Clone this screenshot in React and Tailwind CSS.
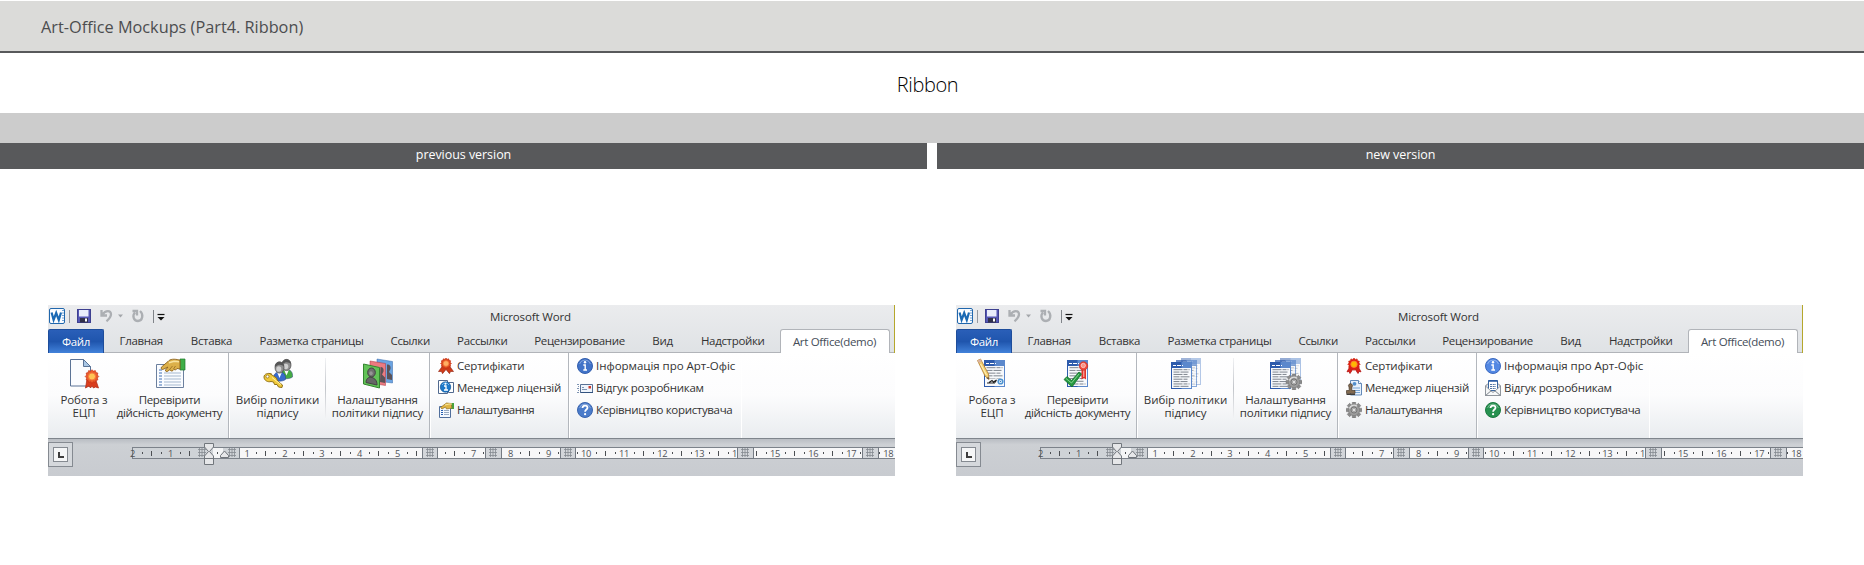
import React from "react";

const TABS = [
  ["Главная", "w-[70.5px]"],
  ["Вставка", "w-[70px]"],
  ["Разметка страницы", "w-[130px]"],
  ["Ссылки", "w-[67.5px]"],
  ["Рассылки", "w-[76.5px]"],
  ["Рецензирование", "w-[118px]"],
  ["Вид", "w-[48px]"],
  ["Надстройки", "w-[92.5px]"],
];

/* ---------- shared drawing pieces ---------- */

function Rosette({ cx, cy, r, fill = "#e2481c", rim = "#c12a10", core = "#ffb74a" }) {
  const pts = [];
  for (let i = 0; i < 24; i++) {
    const a = (i * Math.PI) / 12;
    const k = i % 2 ? r * 0.82 : r;
    pts.push(`${cx + Math.cos(a) * k},${cy + Math.sin(a) * k}`);
  }
  return (
    <>
      <polygon points={pts.join(" ")} fill={fill} stroke={rim} strokeWidth="0.6" />
      <circle cx={cx} cy={cy} r={r * 0.52} fill={core} stroke="#f6793a" strokeWidth={r * 0.14} />
    </>
  );
}

function Gear({ cx, cy, r }) {
  return (
    <g transform={`translate(${cx} ${cy}) scale(${r / 8})`}>
      {[0, 45, 90, 135].map((a) => (
        <rect key={a} x="-1.8" y="-8" width="3.6" height="16" rx="0.5" fill="#8b8b8b" stroke="#656565" strokeWidth="0.4" transform={`rotate(${a})`} />
      ))}
      <circle r="5.7" fill="#9c9c9c" stroke="#747474" strokeWidth="0.5" />
      <path d="M-4.6 -1.5 A4.8 4.8 0 0 1 3 -3.8" stroke="#dcdcdc" strokeWidth="1.4" fill="none" />
      <circle r="3" fill="#b9b9b9" stroke="#686868" strokeWidth="0.8" />
      <circle r="1.5" fill="#f4f4f4" stroke="#777" strokeWidth="0.5" />
    </g>
  );
}

function Page({ x, y, w, h, lines = 6, fade = 1 }) {
  const step = (h - 8) / lines;
  return (
    <g opacity={fade}>
      <rect x={x} y={y} width={w} height={h} fill="#5b88cc" />
      <rect x={x} y={y} width={w / 2} height={h} fill="#2d5bac" />
      <rect x={x + 1} y={y + 6} width={w - 2} height={h - 7} fill="#f7f9fc" />
      <path d={`M${x + 2} ${y + 3.5}h3m1 0h4m1 0h1`} stroke="#fff" strokeWidth="1" />
      {Array.from({ length: lines }, (_, i) => (
        <path key={i} d={`M${x + 2.5} ${y + 7.7 + i * step}h${w - 5 - (i % 3)}`} stroke="#7e858e" strokeWidth="1" strokeDasharray={i % 2 ? "6 1 9 1" : "9 1 4 1"} />
      ))}
    </g>
  );
}

function Hand({ transform }) {
  return (
    <g transform={transform}>
      <path d="M24 0h5v11h-5z" fill="#3fae47" stroke="#1d7a2b" strokeWidth="0.7" />
      <path d="M24 1.2C18-.5 14 0 12 2.500L5.500 8C4.500 9.700 6 11.200 7.500 10.200L12 8l-2.500 3c-.5 1.500 1.500 2 2.300 1.200L14 10.500c0 1.500 2 2 3 1l1-1.200c1 1 2.500.500 3-.800L24 10z" fill="#dcb04a" stroke="#8c621c" strokeWidth="0.9" />
      <path d="M13 3.800l5-1.500 5 .500" stroke="#f8e3a0" strokeWidth="1.500" fill="none" />
      <path d="M14 10l2.500-3M17.500 10l2-3" stroke="#8c621c" strokeWidth="0.700" />
    </g>
  );
}

function Person({ x, y, shirt, s = 1 }) {
  return (
    <g transform={`translate(${x} ${y}) scale(${s})`}>
      <path d="M-6 17.500c-.5-5 2-7.500 6-7.500s6.500 2.500 6 7.500c-3 2.300-9 2.300-12 0z" fill={shirt} stroke="#26407c" strokeWidth="0.5" />
      <path d="M-2.500 10l2.500 6 2.500-6z" fill="#fff" />
      <ellipse cx="0" cy="5.500" rx="4.500" ry="5.600" fill="#8e8e8e" stroke="#4a4a4a" strokeWidth="0.7" />
      <path d="M-4.500 5C-5.500-1.500 4.500-2.500 4.600 4.500 2 3 0 1.500-4.500 5z" fill="#565656" />
      <ellipse cx="-.7" cy="7" rx="2.500" ry="2.800" fill="#cfcfcf" />
    </g>
  );
}

/* ---------- large icons ---------- */

const Big = ({ children }) => (
  <svg width="32" height="32" viewBox="0 0 32 32" className="shrink-0">{children}</svg>
);

const CertPage = () => (
  <Big>
    <path d="M2.500 1.500h13l7 7v19.500h-20z" fill="#fbfcff" stroke="#5b7396" />
    <path d="M15.500 1.500v7h7z" fill="#a9c7e6" stroke="#5b7396" />
    <path d="M19 21l-1.500 9 3.500-2 1.500 2 1.500-2 1.500 2 2-1 3 1-3-9z" fill="#d93d1e" stroke="#aa2510" strokeWidth="0.700" />
    <Rosette cx={24} cy={18.500} r={6.800} fill="#ea5b2c" core="#ffc355" />
  </Big>
);

const CheckHand = () => (
  <Big>
    <path d="M2.500 6.500h27v23h-27z" fill="#fafcff" stroke="#6c809e" />
    <path d="M5 12h3M5 15h3M5 18h3M5 21h3M5 24h3M5 27h3" stroke="#3e6fb3" />
    <path d="M10 15h17M10 18h17M10 21h17M10 24h17M10 27h17" stroke="#a5b8cf" />
    <Hand transform="translate(2 1)" />
  </Big>
);

const KeyPeople = () => (
  <Big>
    <Person x={24.500} y={1.500} shirt="#46ab44" />
    <Person x={17.500} y={4} shirt="#386bcc" />
    <path d="M8.500 16l6 4 1 3 5 4-.5 2.500-3.500-.5-1.500-2.500-2.500 0-1-2.500-2.500-.500c-3 1-7-1-7-4.500 0-3 4-4.500 7.500-3z" fill="#f0c93a" stroke="#927215" />
    <circle cx="5.500" cy="18.500" r="1.500" fill="#fff" stroke="#927215" strokeWidth="0.800" />
    <path d="M10 19.500l9 7" stroke="#fff2a4" />
  </Big>
);

const Cards = () => (
  <Big>
    <g stroke="#777b" strokeWidth="0.500">
      <path d="M15 1l15.500 2.500v21.500l-15.500-2z" fill="#6ba4e2" stroke="#3466a8" />
      <path d="M8 3l15.500 2.500v22L8 25z" fill="#ec7a80" stroke="#a93443" />
    </g>
    <path d="M25 6.500c3 0 4 2 3.500 4.500l-1.500 3 3 3v5l-5-1zM18.500 9c2.500 0 3.500 2 3 4.500l-1.500 3 3 3v5.500l-5-1z" fill="#5b5258" />
    <path d="M1.500 6l16 3.500v20.500l-16-4z" fill="#62c257" stroke="#34862f" />
    <ellipse cx="9.500" cy="14.500" rx="3.800" ry="4.500" fill="#6f6f6f" stroke="#414141" />
    <path d="M4 24.500c0-4 3-6 6-5s5 3 5 7.500z" fill="#666" stroke="#444" />
    <ellipse cx="9" cy="15.200" rx="1.700" ry="2" fill="#969696" />
  </Big>
);

const SignPage = () => (
  <Big>
    <Page x={8} y={2} w={21} h={27} lines={7} />
    <rect x="9.500" y="20.500" width="18.500" height="7" fill="#f7f9fc" />
    <path d="M11 25h8M13 24.500l3-2 1.500 1.500 3-2-1.500 2.500" stroke="#222" strokeWidth="1.100" fill="none" />
    <circle cx="24.500" cy="23.500" r="2.300" fill="#fff" stroke="#4d94d2" strokeWidth="1.600" />
    <circle cx="24.500" cy="23.500" r="0.800" fill="#3b7cc0" />
    <path d="M1.500 2.500l3-1.500 8 15 .500 5.500-4-3.500z" fill="#f3cf71" stroke="#b17b2d" strokeWidth="0.800" />
    <path d="M1.500 2.500l3-1.500 1.200 2.500-2.800 1.500z" fill="#d9b3a0" />
    <path d="M4.500 6l6 11" stroke="#fff0b4" strokeWidth="1.100" />
    <path d="M10.500 20l2-1 .5 2.500z" fill="#54422c" />
  </Big>
);

const VerifyPage = () => (
  <Big>
    <Page x={5} y={2} w={21} h={27} lines={7} />
    <path d="M19.500 11h4.500v10.500l-2.200-1.500-2.300 1.500z" fill="#e2342b" />
    <path d="M21.800 12v7" stroke="#fff" strokeWidth="0.700" />
    <circle cx="21.500" cy="8" r="4.200" fill="#ee493b" stroke="#c72c25" strokeWidth="0.700" />
    <circle cx="21.300" cy="7.500" r="2.200" fill="#f89387" stroke="#fff" strokeWidth="0.500" />
    <path d="M2 21.500l3-3 4.500 4L17 14l2.500 2L10 29z" fill="#259740" stroke="#126f2a" strokeWidth="0.800" />
    <path d="M4 20.500l5.500 4.500 7.500-9" stroke="#8edb96" fill="none" strokeWidth="0.900" />
  </Big>
);

const PageStack = () => (
  <Big>
    <Page x={11} y={0} w={20} h={27} fade={0.450} lines={7} />
    <Page x={6} y={2} w={21} h={27} fade={0.7} lines={7} />
    <Page x={1} y={4} w={21} h={27} lines={8} />
  </Big>
);

const PageStackGear = () => (
  <Big>
    <Page x={10} y={0} w={21} h={26} fade={0.500} lines={7} />
    <Page x={5} y={2} w={21} h={27} fade={0.7} lines={7} />
    <Page x={0} y={4} w={21} h={27} lines={8} />
    <Gear cx={24} cy={24} r={8} />
  </Big>
);

/* ---------- small icons ---------- */

const Small = ({ children }) => (
  <svg width="16" height="16" viewBox="0 0 16 16" className="shrink-0">{children}</svg>
);

const Award = () => (
  <Small>
    <path d="M4.500 8L.5 13.500l3 0 1 2.200L8 11.500l3.500 4.200 1-2.200 3 0L11.500 8z" fill="#cf3a19" stroke="#8f220f" strokeWidth="0.600" />
    <Rosette cx={8} cy={5.500} r={5.400} fill="#dc4b20" core="#ffae63" />
  </Small>
);

const AwardBright = () => (
  <Small>
    <path d="M4 8.500L1 13.800l2-.300 1 2 3-4.500zM12 8.500l3 5.300-2-.300-1 2-3-4.500z" fill="#d9211c" stroke="#b21310" strokeWidth="0.800" />
    <Rosette cx={8} cy={6.300} r={6.200} fill="#e41d12" core="#ffb800" />
  </Small>
);

const LicenseInfo = () => (
  <Small>
    <path d="M.5.500h9v13h-9z" fill="#fff" stroke="#51698f" />
    <path d="M10.500 2.500h5v10h-5z" fill="#fff" stroke="#51698f" />
    <circle cx="7.500" cy="7" r="5.200" fill="#1c78c9" stroke="#0e559a" strokeWidth="0.700" />
    <path d="M4 5a4 4 0 0 1 7 0" stroke="#74b9ee" fill="none" />
    <path d="M6 6h2v4M6 10h4" stroke="#fff" strokeWidth="1.300" fill="none" />
    <circle cx="7.500" cy="3.700" r="1" fill="#fff" />
  </Small>
);

const FormHand = () => (
  <Small>
    <path d="M1.500 4.500h11v11h-11z" fill="#f5f9ff" stroke="#516f9c" />
    <path d="M3 8.500h2M3 10.500h2M3 12.500h2" stroke="#275fb1" />
    <path d="M6 8.500h5M6 10.500h5M6 12.500h5" stroke="#96a9c1" />
    <path d="M13 1h3v6h-3z" fill="#47a23d" />
    <path d="M13 1.500L8.500 1 2.500 5.500l1.500 1.500 3.500-2 1 2 3-.5L14 6z" fill="#e0b544" stroke="#947021" strokeWidth="0.700" />
    <path d="M7 3l4-1h3" stroke="#fbea9e" fill="none" />
  </Small>
);

const StampPage = () => (
  <Small>
    <path d="M4.500.500h8l3 3v11.500h-11z" fill="#e6f0fc" stroke="#6289b8" />
    <path d="M12.500.500v3h3" fill="#fff" stroke="#6289b8" />
    <circle cx="8.500" cy="3.800" r="1.900" fill="#518fce" />
    <path d="M7 8h7M8 10.500h6M9 12.500h5" stroke="#79a4d3" />
    <path d="M3 7a2 2 0 1 1 3 0L5.700 10.500H9v3H.5v-3h2.800z" fill="#81694f" stroke="#473a2d" strokeWidth="0.700" />
    <path d="M.5 14.500h8.500" stroke="#3f3c39" />
  </Small>
);

const GearSmall = () => <Small><Gear cx={8} cy={8} r={7.900} /></Small>;

const RoundBadge = ({ color, edge, glyph }) => (
  <Small>
    <circle cx="8" cy="8" r="7.500" fill={color} stroke={edge} />
    <path d="M2.500 6a5.800 5.800 0 0 1 11 0" stroke="#ffffff55" fill="none" />
    {glyph === "i" ? (
      <>
        <circle cx="8" cy="4.300" r="1.200" fill="#fff" />
        <path d="M6.300 7h1.900v5M6.300 12h3.700" stroke="#fff" strokeWidth="1.400" fill="none" />
      </>
    ) : (
      <>
        <path d="M5.500 6c0-3.200 5-3.200 5-.300 0 1.800-2.400 1.800-2.400 4" stroke="#fff" strokeWidth="1.800" fill="none" />
        <circle cx="8.100" cy="12.200" r="1.100" fill="#fff" />
      </>
    )}
  </Small>
);

const MailFast = () => (
  <Small>
    <path d="M0 4.500h2M1 6.500h1M0 8.500h2M1 10.500h1M0 12.500h2" stroke="#7d93b1" />
    <path d="M3.500 4.500h12v8h-12z" fill="#eef4fc" stroke="#587094" />
    <path d="M3.500 12.500h12.500" stroke="#31527f" />
    <path d="M5 9.500h5M5 7.500h2" stroke="#7d93b1" />
    <path d="M11.500 6h2.500v2.500h-2.500z" fill="#cf3a2c" />
  </Small>
);

const MailLetter = () => (
  <Small>
    <path d="M.5 6L3 3.500h10L15.500 6v9.500H.5z" fill="#e3e5e8" stroke="#797f88" />
    <path d="M3.500.500h9v10h-9z" fill="#fff" stroke="#38659f" />
    <path d="M3.500 1h9" stroke="#2a5ba6" strokeWidth="1.500" />
    <path d="M5 4.500h6M5 6.500h6M5 8.500h6" stroke="#5577a5" strokeDasharray="2 .7" />
    <path d="M.5 6l5.500 5L.5 15.500zM15.500 6L10 11l5.500 4.500z" fill="#f5f6f7" stroke="#858b93" strokeWidth="0.800" />
    <path d="M.7 15.500L6 11l2 1.500L10 11l5.300 4.500z" fill="#f8f9fa" stroke="#858b93" strokeWidth="0.800" />
  </Small>
);

/* ---------- quick access bar ---------- */

function QuickAccess() {
  return (
    <svg width="124" height="24" viewBox="0 0 124 24" className="shrink-0">
      <rect x="1.500" y="3.500" width="15" height="15" rx="1.500" fill="#f8fbff" stroke="#2167ac" />
      <path d="M14 5.500h2M14 8h2M14 10.500h2M14 13h2M14 15.500h2" stroke="#74a5d6" />
      <rect x="3" y="6" width="10.500" height="10.500" fill="#fff" />
      <path d="M3.600 7.500l2 7.500 2.600-7 2.600 7 2.200-7.500" stroke="#1a69b4" strokeWidth="2.200" fill="none" />
      <path d="M21.500 5v13" stroke="#9599a0" />
      <rect x="29.500" y="4.500" width="13" height="13" fill="#5557b4" stroke="#3e4090" />
      <rect x="31" y="5" width="9.500" height="6.500" fill="#e9edfb" />
      <rect x="32" y="13" width="8" height="4.500" fill="#303049" />
      <rect x="37" y="13.500" width="2" height="3" fill="#fff" />
      <path d="M53.500 5v5.500h5.500M54.500 9.500c3-4.500 8.500-4.500 8.500-.2 0 3-2 4.700-4.500 7" stroke="#acafb3" strokeWidth="2.300" fill="none" />
      <path d="M70 9.500h5l-2.500 3z" fill="#a3a6aa" />
      <path d="M87 7.500c-3 3-1.500 8.500 3 8.500s6-6.500 2-10M84.500 6h4.500v4.500" stroke="#acafb3" strokeWidth="2.300" fill="none" />
      <path d="M105.500 5v13" stroke="#808489" />
      <path d="M109.500 9.500h7" stroke="#111" strokeWidth="1.200" />
      <path d="M109.500 12h7l-3.500 3.500z" fill="#111" />
    </svg>
  );
}

/* ---------- ruler ---------- */

const NUMBERS = [[84.5, "2"], [122.5, "1"], [199, "1"], [236.7, "2"], [273.8, "3"], [311.5, "4"], [349.5, "5"], [425.5, "7"], [462.5, "8"], [500.5, "9"], [538, "10"], [576, "11"], [614.3, "12"], [651.3, "13"], [686.5, "1"], [727, "15"], [765.3, "16"], [803.3, "17"], [840.3, "18"]];
const BARS = [103.5, 141.5, 217.5, 255.5, 292.5, 330.5, 368.5, 406.5, 481.5, 557.5, 595.5, 633.5, 670.5, 708.5, 746.5, 784.5];
const BLOCKS = [[374, 389], [437, 453], [512, 527], [689, 705], [814, 830]];
const NO_DOT = [[148, 162], [374, 389], [689, 715]];

function Grid({ x }) {
  return (
    <path d={`M${x} 8.500h8M${x} 11.500h8M${x} 14.500h8M${x + 1.5} 7v9M${x + 4} 7v9M${x + 6.5} 7v9`} stroke="#858a91" strokeWidth="0.800" />
  );
}

function Ruler() {
  const dots = BARS.flatMap((b) => [b - 9, b + 9.5]).concat([169.5, 435.5, 510.5, 529, 812.5, 831.5]).filter((d) => !NO_DOT.some(([a, b]) => d > a && d < b));
  return (
    <svg width="763" height="24" viewBox="84 0 763 24" className="ml-auto mt-[2px] block overflow-visible">
      <rect x="84.500" y="6.500" width="107" height="11" fill="#cfd3d7" stroke="#7c828a" />
      <rect x="191.500" y="6.500" width="660" height="11" fill="#f7f7f8" stroke="#7c828a" />
      <rect x="165" y="7" width="10" height="10" fill="#f4f5f6" />
      {BLOCKS.map(([a, b]) => (
        <g key={a}>
          <rect x={a + 0.5} y="6.500" width={b - a} height="11" fill="#d3d6da" stroke="#757b83" />
          <Grid x={a + 4} />
        </g>
      ))}
      <Grid x={150} />
      <Grid x={180} />
      {BARS.map((b) => <rect key={b} x={b - 0.5} y="10" width="1" height="5" fill="#4c4f53" />)}
      {dots.map((d) => <rect key={d} x={Math.round(d - 0.5)} y="11" width="1" height="2" fill="#4c4f53" />)}
      {NUMBERS.map(([x, t]) => (
        <text key={x} x={x} y="15.500" textAnchor="middle" fontSize="9.300" fill="#4f5257" fontFamily="Open Sans" fontWeight="500">{t}</text>
      ))}
      <path d="M156.500 2.500h9v3.500l-4 4.500 4 4.500v8.500h-9V15l4-4.500-4-4.500z" fill="#e6e7e9" stroke="#71767c" />
      <path d="M157 17.500h8" stroke="#71767c" />
      <path d="M172.500 16.500v-2l4-4.500 4 4.500v2z" fill="#e6e7e9" stroke="#71767c" />
    </svg>
  );
}

/* ---------- ribbon ---------- */

function BigButton({ icon: Icon, lines, className }) {
  return (
    <div className={`flex flex-col items-center text-center whitespace-nowrap ${className}`}>
      <Icon />
      <div className="mt-[3px] leading-[13px]">
        {lines.map((l) => <div key={l}>{l}</div>)}
      </div>
    </div>
  );
}

function SmallButton({ icon: Icon, text, className = "" }) {
  return (
    <div className={`flex h-[22px] items-center gap-[3px] whitespace-nowrap ${className}`}>
      <Icon />
      <span className="leading-[16px]">{text}</span>
    </div>
  );
}

const Divider = () => <div className="h-full w-[2px] shrink-0 border-l border-[#b3b7bd] bg-white" />;

function WordWindow({ big, small }) {
  const [b1, b2, b3, b4] = big;
  return (
    <div className="flex h-[171px] w-[847px] flex-col overflow-hidden text-[11.5px] font-medium tracking-[-0.33px] text-[#333333]">
      <div className="flex h-[48px] flex-col border-r border-[#b5a72c] bg-linear-to-b from-[#ebecee] to-[#dfe2e5]">
        <div className="flex h-[24px] items-center">
          <QuickAccess />
          <span className="ml-[318px] tracking-[-0.15px] whitespace-nowrap">Microsoft Word</span>
        </div>
        <div className="flex h-[24px] whitespace-nowrap shadow-[inset_0_-1px_0_#b1b4b9]">
          <div className="mr-[2px] flex w-[56px] shrink-0 items-center justify-center rounded-t-[2px] border border-b-0 border-[#1e4d9b] bg-linear-to-b from-[#2a5fb8] via-[#1f55ad] to-[#4282da] text-white">Файл</div>
          {TABS.map(([t, w]) => (
            <div key={t} className={`flex shrink-0 items-center justify-center ${w}`}>{t}</div>
          ))}
          <div className="ml-[0.5px] flex w-[110px] shrink-0 items-center justify-center rounded-t-[3px] border border-b-0 border-[#b1b4b9] bg-white text-[#454d58]">Art Office(demo)</div>
        </div>
      </div>
      <div className="flex h-[85px] bg-linear-to-b from-white via-[#fcfcfd] to-[#e9ecef]">
        <div className="flex w-[180px] shrink-0 pt-[5px]">
          <BigButton icon={b1} lines={["Робота з", "ЕЦП"]} className="w-[72px] tracking-[-0.1px]" />
          <BigButton icon={b2} lines={["Перевірити", "дійсність документу"]} className="w-[99px]" />
        </div>
        <Divider />
        <div className="flex w-[199px] shrink-0 pt-[5px]">
          <BigButton icon={b3} lines={["Вибір політики", "підпису"]} className="w-[95px] tracking-[-0.05px]" />
          <div className="h-[60px] w-px bg-linear-to-b from-[#f1f2f4] via-[#c2c5ca] to-[#f1f2f4]" />
          <BigButton icon={b4} lines={["Налаштування", "політики підпису"]} className="w-[103px] tracking-[-0.22px]" />
        </div>
        <Divider />
        <div className="w-[137px] shrink-0 pt-[2px] pl-[7px]">
          <SmallButton icon={small[0]} text="Сертифікати" className="tracking-[-0.2px]" />
          <SmallButton icon={small[1]} text="Менеджер ліцензій" className="tracking-[-0.25px]" />
          <SmallButton icon={small[2]} text="Налаштування" className="tracking-[-0.5px]" />
        </div>
        <Divider />
        <div className="w-[172px] shrink-0 border-r border-white pt-[2px] pl-[7px]">
          <SmallButton icon={small[3]} text="Інформація про Арт-Офіс" className="tracking-[-0.03px]" />
          <SmallButton icon={small[4]} text="Відгук розробникам" className="tracking-[-0.25px]" />
          <SmallButton icon={small[5]} text="Керівництво користувача" />
        </div>
      </div>
      <div className="flex h-[38px] border-t border-[#7f858c] bg-linear-to-b from-[#b9bdc3] via-[#cdd0d4] via-15% to-[#c8cbd0]">
        <div className="mt-[3px] flex size-[25px] shrink-0 items-center justify-center border border-[#858a91] bg-[#d5d8dc]">
          <div className="flex size-[15px] items-center justify-center border border-[#858a91] bg-[#f5f6f7]">
            <div className="size-[6px] border-b-2 border-l-2 border-[#3d3d3d]" />
          </div>
        </div>
        <Ruler />
      </div>
    </div>
  );
}

const InfoBlue = () => <RoundBadge color="#4173c8" edge="#345fae" glyph="i" />;
const HelpBlue = () => <RoundBadge color="#4a7bca" edge="#3964ae" glyph="?" />;
const InfoLight = () => <RoundBadge color="#5388e3" edge="#3c6ac0" glyph="i" />;
const HelpGreen = () => <RoundBadge color="#279150" edge="#1b7a40" glyph="?" />;

export default function App() {
  return (
    <div className="h-[565px] w-[1864px] overflow-hidden bg-white pt-px font-['Open_Sans',sans-serif]">
      <header className="flex h-[52px] items-center border-b-2 border-[#58595b] bg-[#dbdbd9] pt-[2px] pl-[41px] text-[16.3px] text-[#4c4d4f]">Art-Office Mockups (Part4. Ribbon)</header>
      <div className="flex h-[60px] items-center justify-center pt-[3px] pr-[9px] text-[20px] font-light tracking-[-0.4px] text-black">Ribbon</div>
      <div className="h-[30px] bg-[#cccccc]" />
      <div className="flex gap-[10px] text-[12.5px] leading-[24px] font-medium tracking-[-0.05px] text-white">
        <div className="h-[26px] w-[927px] bg-[#58595b] text-center">previous version</div>
        <div className="h-[26px] w-[927px] bg-[#58595b] text-center">new version</div>
      </div>
      <main className="mt-[136px] flex gap-[61px] pl-[48px]">
        <WordWindow big={[CertPage, CheckHand, KeyPeople, Cards]} small={[Award, LicenseInfo, FormHand, InfoBlue, MailFast, HelpBlue]} />
        <WordWindow big={[SignPage, VerifyPage, PageStack, PageStackGear]} small={[AwardBright, StampPage, GearSmall, InfoLight, MailLetter, HelpGreen]} />
      </main>
    </div>
  );
}
